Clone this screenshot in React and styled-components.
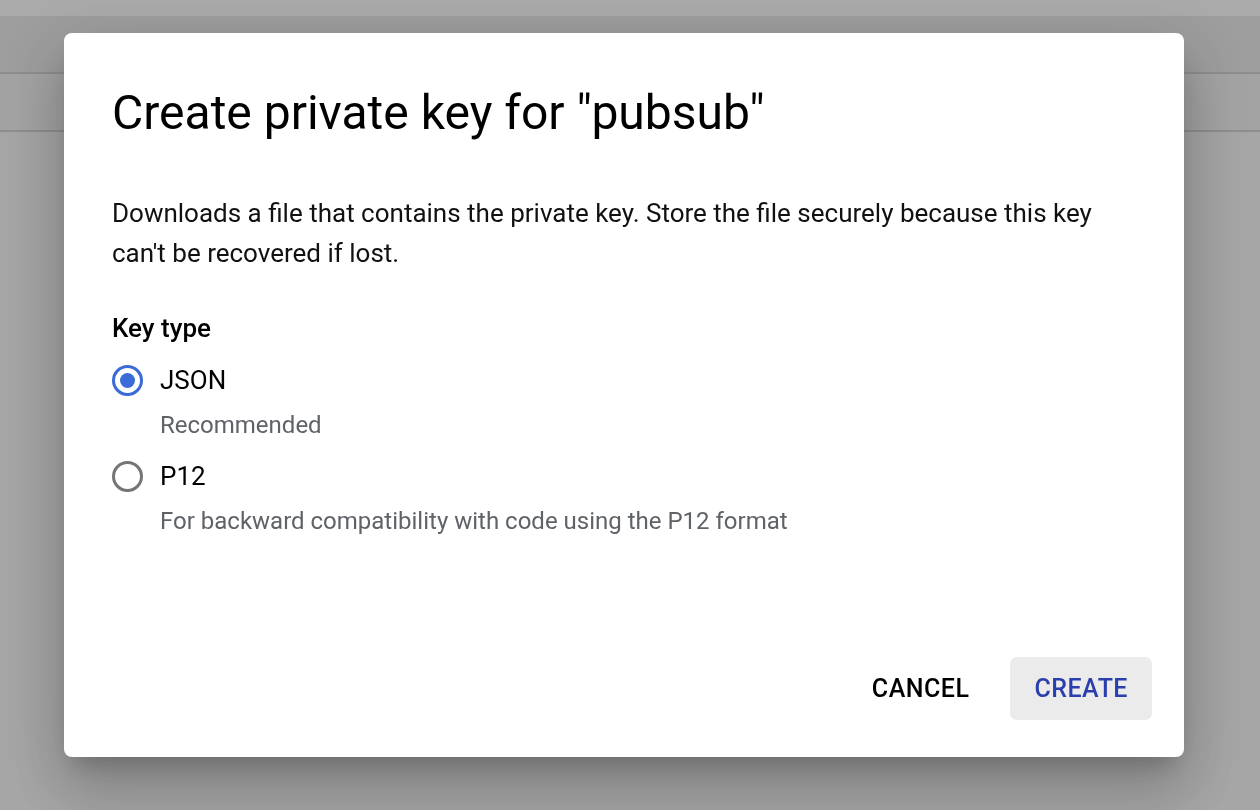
import React from "react";
import styled, { createGlobalStyle } from "styled-components";

const Global = createGlobalStyle`
  html, body { margin: 0; padding: 0; }
  body {
    width: 1260px;
    height: 810px;
    overflow: hidden;
    font-family: Roboto, "Noto Sans", Arial, sans-serif;
    background: #f8f8f8;
  }
`;

const Page = styled.div`
  width: 1260px;
  height: 810px;
  display: flex;
  flex-direction: column;
  background: #f8f8f8;
`;

const TopStrip = styled.div`
  height: 16px;
  background: #ffffff;
`;

const Toolbar = styled.div`
  height: 56px;
  background: #ececec;
  border-bottom: 2px solid #d4d4d4;
`;

const SubBar = styled.div`
  height: 56px;
  background: #f4f4f4;
  border-bottom: 2px solid #d4d4d4;
`;

const Scrim = styled.div`
  position: fixed;
  inset: 0;
  background: rgba(0, 0, 0, 0.33);
`;

const Dialog = styled.div`
  position: fixed;
  top: 33px;
  left: 64px;
  width: 1120px;
  box-sizing: border-box;
  padding: 52px 32px 37px 48px;
  background: #ffffff;
  border-radius: 8px;
  display: flex;
  flex-direction: column;
  box-shadow: 0 36px 57px 4px rgba(0, 0, 0, 0.14),
    0 14px 69px 12px rgba(0, 0, 0, 0.12),
    0 16px 22px -10px rgba(0, 0, 0, 0.2);
`;

const Title = styled.h2`
  margin: 0;
  font-size: 48px;
  line-height: 56px;
  font-weight: 400;
  color: #000;
`;

const Body = styled.p`
  margin: 52px 0 0;
  font-size: 26px;
  line-height: 40px;
  color: #111;
  max-width: 1010px;
`;

const Label = styled.div`
  margin-top: 39px;
  font-size: 26px;
  line-height: 32px;
  font-weight: 500;
  color: #000;
`;

const Option = styled.label`
  display: flex;
  align-items: center;
  gap: 17px;
  height: 40px;
  margin-top: ${(p) => p.$gap}px;
  font-size: 26px;
  color: #000;
`;

const Radio = styled.span`
  box-sizing: border-box;
  width: 31px;
  height: 31px;
  border-radius: 50%;
  border: 3px solid ${(p) => (p.$checked ? "#3b6bd6" : "#757575")};
  display: flex;
  align-items: center;
  justify-content: center;
  &::after {
    content: "";
    width: 15px;
    height: 15px;
    border-radius: 50%;
    background: ${(p) => (p.$checked ? "#3b6bd6" : "transparent")};
  }
`;

const Hint = styled.div`
  margin-top: 9px;
  margin-left: 48px;
  font-size: 24px;
  line-height: 32px;
  color: #5f6368;
`;

const Actions = styled.div`
  margin-top: 120px;
  display: flex;
  justify-content: flex-end;
  gap: 17px;
`;

const Button = styled.button`
  height: 63px;
  padding: 0 24px;
  border: none;
  border-radius: 7px;
  font-family: Roboto, Arial, sans-serif;
  font-size: 25px;
  font-weight: 500;
  letter-spacing: 0.5px;
  background: ${(p) => (p.$primary ? "#ebebeb" : "transparent")};
  color: ${(p) => (p.$primary ? "#2a3fad" : "#000")};
  cursor: pointer;
`;

export default function App() {
  return (
    <>
      <Global />
      <Page>
        <TopStrip />
        <Toolbar />
        <SubBar />
      </Page>
      <Scrim />
      <Dialog>
        <Title>Create private key for "pubsub"</Title>
        <Body>
          Downloads a file that contains the private key. Store the file securely
          because this key can't be recovered if lost.
        </Body>
        <Label>Key type</Label>
        <Option $gap={16}>
          <Radio $checked />
          JSON
        </Option>
        <Hint>Recommended</Hint>
        <Option $gap={15}>
          <Radio />
          P12
        </Option>
        <Hint>For backward compatibility with code using the P12 format</Hint>
        <Actions>
          <Button>CANCEL</Button>
          <Button $primary>CREATE</Button>
        </Actions>
      </Dialog>
    </>
  );
}
